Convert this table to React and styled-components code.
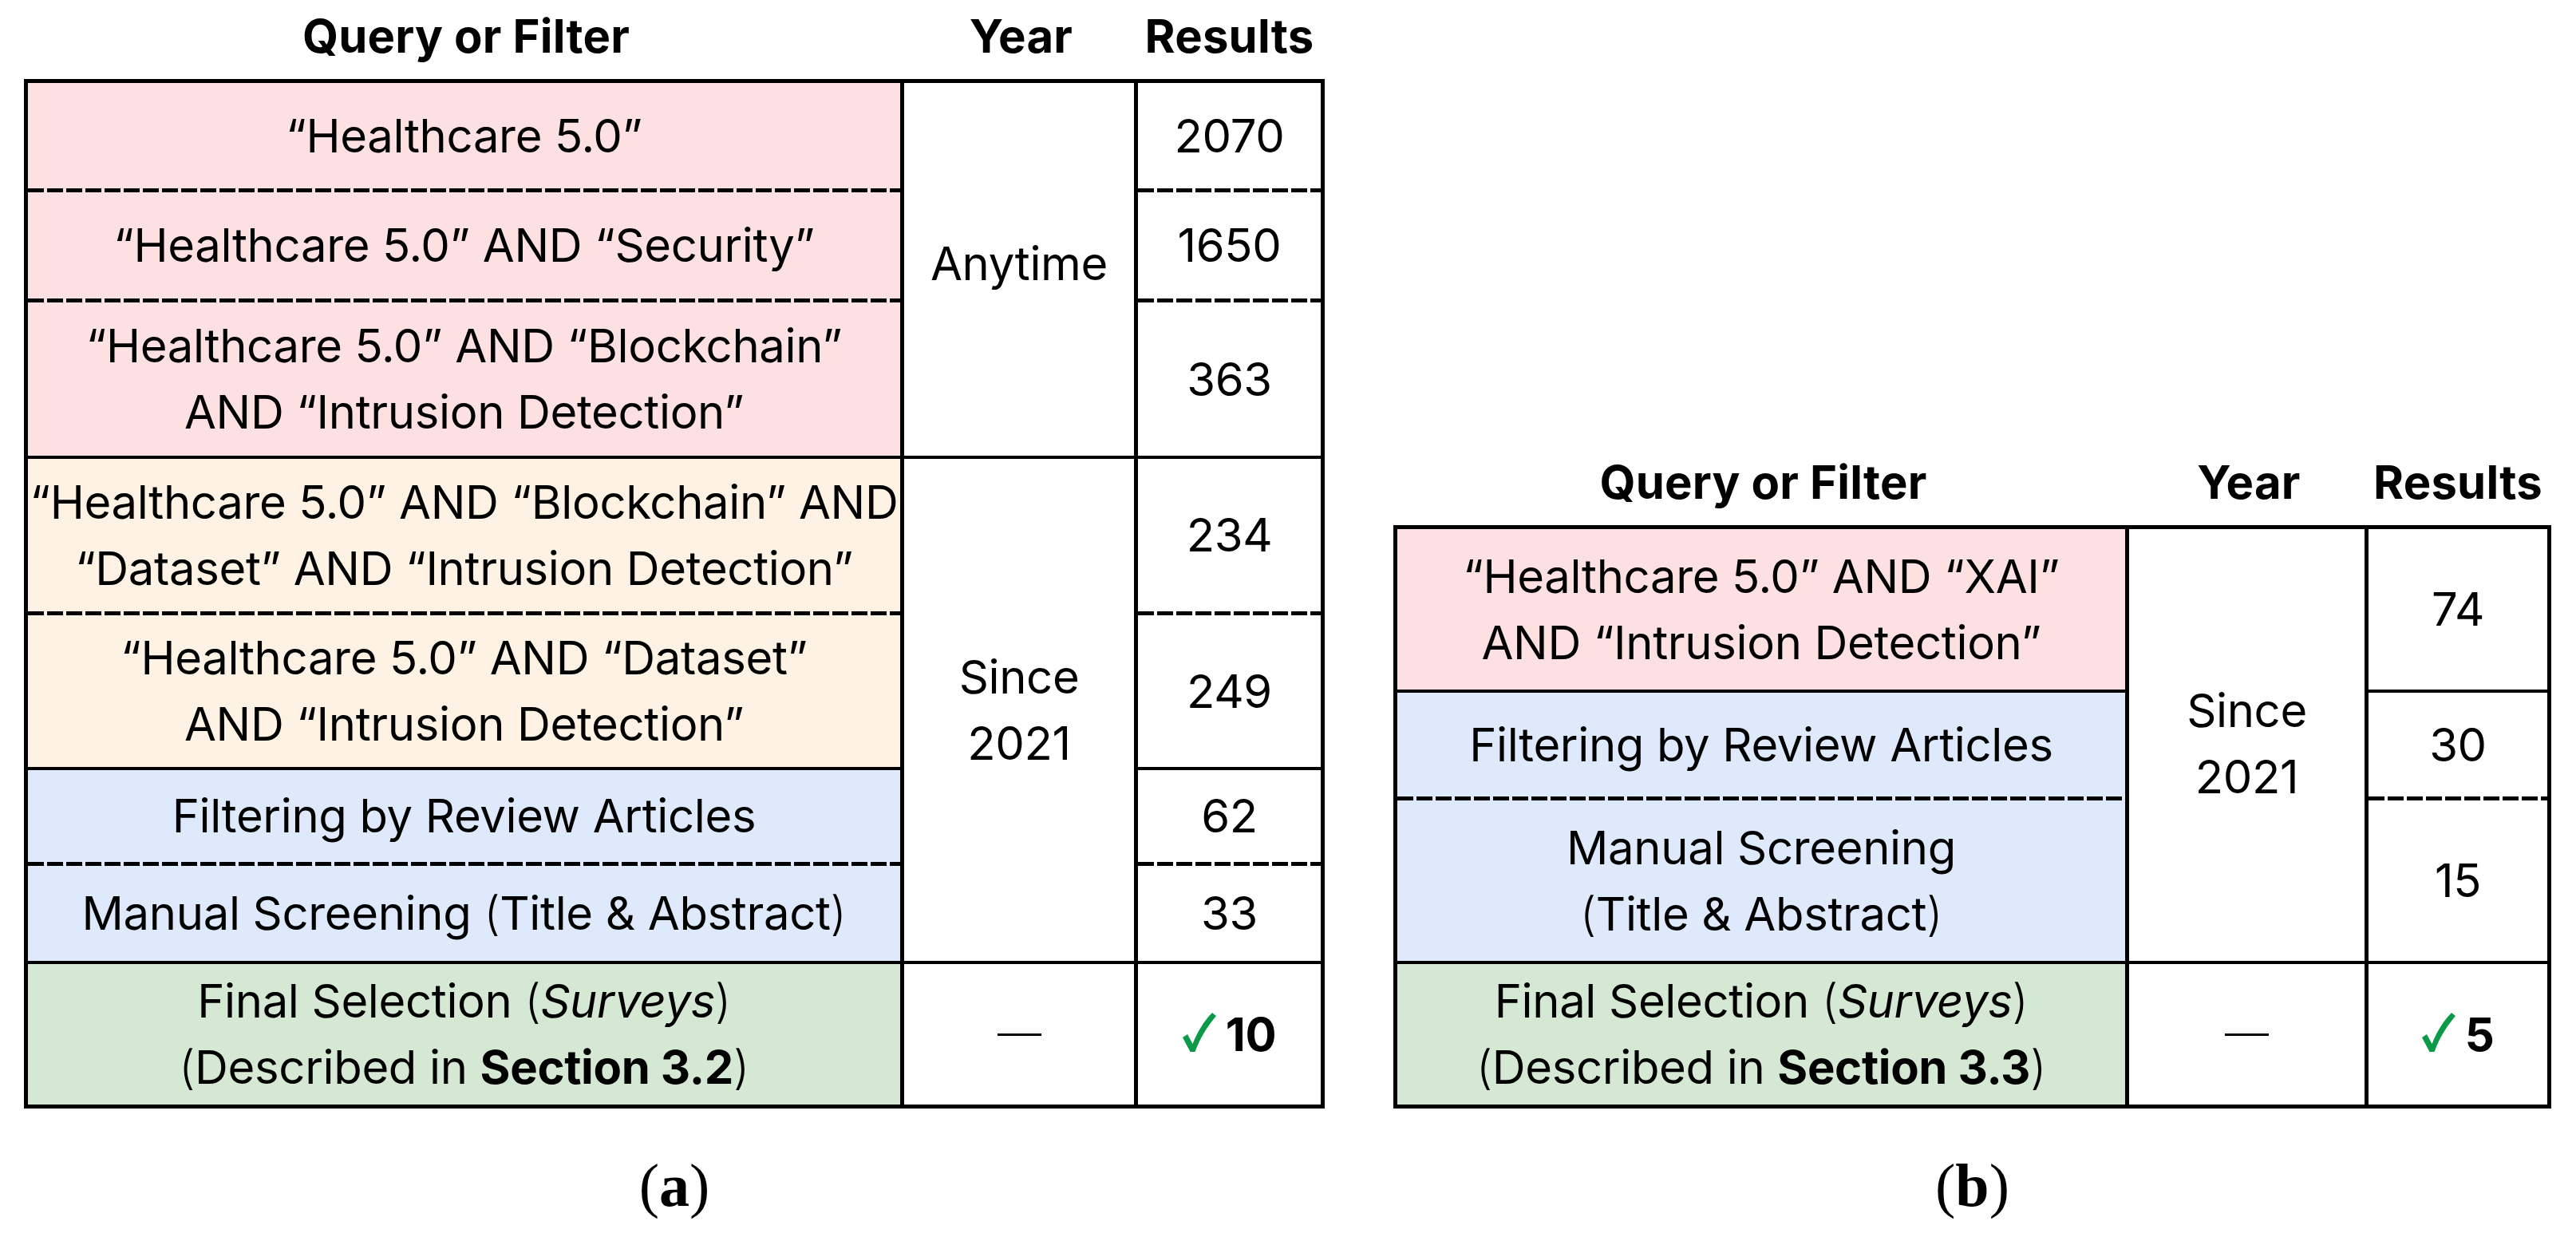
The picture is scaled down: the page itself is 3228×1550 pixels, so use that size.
import React from 'react';
import styled, { createGlobalStyle } from 'styled-components';

const GlobalStyle = createGlobalStyle`
  html, body {
    margin: 0;
    padding: 0;
    background: #fff;
  }
  body {
    font-family: Inter, "Liberation Sans", sans-serif;
    color: #000;
  }
`;

const FILL = {
  pink: '#fde1e2',
  peach: '#fef2e5',
  blue: '#deeafc',
  green: '#d5e8d4',
  white: '#ffffff',
};

const DASH = 'repeating-linear-gradient(90deg, #000 0 20px, transparent 20px 24px)';

const Page = styled.div`
  display: flex;
  align-items: flex-end;
  gap: 86px;
  padding-left: 30px;
`;

const Figure = styled.div`
  display: flex;
  flex-direction: column;
`;

const HeaderRow = styled.div`
  display: grid;
  grid-template-columns: ${p => p.$cols.map(c => c + 'px').join(' ')};
  height: 99px;
  padding: 0 5px 9px;
  box-sizing: border-box;
`;

const HeaderCell = styled.div`
  display: flex;
  align-items: center;
  justify-content: center;
  font-size: 58px;
  font-weight: 700;
  letter-spacing: 0.2px;
  white-space: nowrap;
`;

const Table = styled.div`
  display: grid;
  grid-template-columns: ${p => p.$cols.map(c => c + 'px').join(' ')};
  grid-template-rows: ${p => p.$rows.map(r => r + 'px').join(' ')};
  border: 5px solid #000;
`;

const Cell = styled.div`
  box-sizing: border-box;
  display: flex;
  flex-direction: column;
  align-items: center;
  justify-content: center;
  text-align: center;
  white-space: nowrap;
  font-size: 58px;
  line-height: 83px;
  letter-spacing: -0.35px;
  grid-column: ${p => p.$col};
  border-right: ${p => (p.$col < 3 ? '5px solid #000' : 'none')};
  border-bottom: ${p => (p.$sep === 'solid' ? '4px solid #000' : 'none')};
  padding-bottom: ${p => (p.$sep === 'dashed' ? '5px' : '0')};
  background: ${p =>
    p.$sep === 'dashed'
      ? `${DASH} left bottom / 100% 5px no-repeat, ${FILL[p.$bg || 'white']}`
      : FILL[p.$bg || 'white']};
`;

const YearCell = styled(Cell)`
  padding-bottom: ${p => p.$lift || 0}px;
`;

const Line = styled.span`
  display: block;
`;

const Paren = styled.span`
  font-weight: 300;
`;

const Dash = styled.span`
  display: block;
  width: 55px;
  height: 3px;
  background: #000;
`;

const Final = styled.span`
  display: flex;
  align-items: center;
  gap: 12px;
  font-weight: 700;
  font-size: 58px;
`;

const CheckIcon = styled.svg`
  width: 42px;
  height: 50px;
  fill: #0b9a48;
  margin-top: -4px;
`;

const Caption = styled.div`
  margin-top: 53px;
  text-align: center;
  font-family: "Liberation Serif", serif;
  font-size: 76px;
  line-height: 87px;
  b {
    font-weight: 700;
  }
`;

const Check = () => (
  <CheckIcon viewBox="0 0 42 50">
    <path d="M0 31 L6 27 L12.5 39 C19 23 27 10 37 0 L42 4 C31 17 22 31 15.5 49 L9.5 49 Z" />
  </CheckIcon>
);

const q = (s) => `“${s}”`;

const finalText = (sec) => (
  <>
    <Line>
      Final Selection <Paren>(</Paren><i>Surveys</i><Paren>)</Paren>
    </Line>
    <Line>
      <Paren>(</Paren>Described in <b>Section {sec}</b><Paren>)</Paren>
    </Line>
  </>
);

const tables = [
  {
    id: 'a',
    cols: [1098, 293, 229],
    rows: [137, 138, 196, 196, 194, 120, 123, 176],
    query: [
      { bg: 'pink', sep: 'dashed', lines: [q('Healthcare 5.0')] },
      { bg: 'pink', sep: 'dashed', lines: [`${q('Healthcare 5.0')} AND ${q('Security')}`] },
      { bg: 'pink', sep: 'solid', lines: [`${q('Healthcare 5.0')} AND ${q('Blockchain')}`, `AND ${q('Intrusion Detection')}`] },
      { bg: 'peach', sep: 'dashed', lines: [`${q('Healthcare 5.0')} AND ${q('Blockchain')} AND`, `${q('Dataset')} AND ${q('Intrusion Detection')}`] },
      { bg: 'peach', sep: 'solid', lines: [`${q('Healthcare 5.0')} AND ${q('Dataset')}`, `AND ${q('Intrusion Detection')}`] },
      { bg: 'blue', sep: 'dashed', lines: ['Filtering by Review Articles'] },
      { bg: 'blue', sep: 'solid', lines: [<>Manual Screening <Paren>(</Paren>Title &amp; Abstract<Paren>)</Paren></>] },
      { bg: 'green', sep: 'none', content: finalText('3.2') },
    ],
    years: [
      { row: 1, span: 3, sep: 'solid', lift: 14, lines: ['Anytime'] },
      { row: 4, span: 4, sep: 'solid', lines: ['Since', '2021'] },
      { row: 8, span: 1, sep: 'none', dash: true },
    ],
    results: [
      { sep: 'dashed', v: '2070' },
      { sep: 'dashed', v: '1650' },
      { sep: 'solid', v: '363' },
      { sep: 'dashed', v: '234' },
      { sep: 'solid', v: '249' },
      { sep: 'dashed', v: '62' },
      { sep: 'solid', v: '33' },
      { sep: 'none', v: '10', final: true },
    ],
  },
  {
    id: 'b',
    cols: [917, 300, 224],
    rows: [205, 135, 205, 176],
    query: [
      { bg: 'pink', sep: 'solid', lines: [`${q('Healthcare 5.0')} AND ${q('XAI')}`, `AND ${q('Intrusion Detection')}`] },
      { bg: 'blue', sep: 'dashed', lines: ['Filtering by Review Articles'] },
      { bg: 'blue', sep: 'solid', lines: ['Manual Screening', <><Paren>(</Paren>Title &amp; Abstract<Paren>)</Paren></>] },
      { bg: 'green', sep: 'none', content: finalText('3.3') },
    ],
    years: [
      { row: 1, span: 3, sep: 'solid', lift: 4, lines: ['Since', '2021'] },
      { row: 4, span: 1, sep: 'none', dash: true },
    ],
    results: [
      { sep: 'solid', v: '74' },
      { sep: 'dashed', v: '30' },
      { sep: 'solid', v: '15' },
      { sep: 'none', v: '5', final: true },
    ],
  },
];

const ResultsTable = ({ t }) => {
  const cells = [];
  t.query.forEach((row, i) => {
    cells.push(
      <Cell key={`q${i}`} $col={1} $bg={row.bg} $sep={row.sep} style={{ gridRow: i + 1 }}>
        {row.content || row.lines.map((l, j) => <Line key={j}>{l}</Line>)}
      </Cell>
    );
    const y = t.years.find(yr => yr.row === i + 1);
    if (y) {
      cells.push(
        <YearCell
          key={`y${i}`}
          $col={2}
          $sep={y.sep}
          $lift={y.lift}
          style={{ gridRow: `${y.row} / span ${y.span}` }}
        >
          {y.dash ? <Dash /> : y.lines.map((l, j) => <Line key={j}>{l}</Line>)}
        </YearCell>
      );
    }
    const r = t.results[i];
    cells.push(
      <Cell key={`r${i}`} $col={3} $sep={r.sep} style={{ gridRow: i + 1 }}>
        {r.final ? (
          <Final>
            <Check />
            {r.v}
          </Final>
        ) : (
          r.v
        )}
      </Cell>
    );
  });

  return (
    <Figure>
      <HeaderRow $cols={t.cols}>
        <HeaderCell>Query or Filter</HeaderCell>
        <HeaderCell>Year</HeaderCell>
        <HeaderCell>Results</HeaderCell>
      </HeaderRow>
      <Table $cols={t.cols} $rows={t.rows}>
        {cells}
      </Table>
      <Caption>
        (<b>{t.id}</b>)
      </Caption>
    </Figure>
  );
};

export default function App() {
  return (
    <>
      <GlobalStyle />
      <Page>
        {tables.map(t => (
          <ResultsTable key={t.id} t={t} />
        ))}
      </Page>
    </>
  );
}
